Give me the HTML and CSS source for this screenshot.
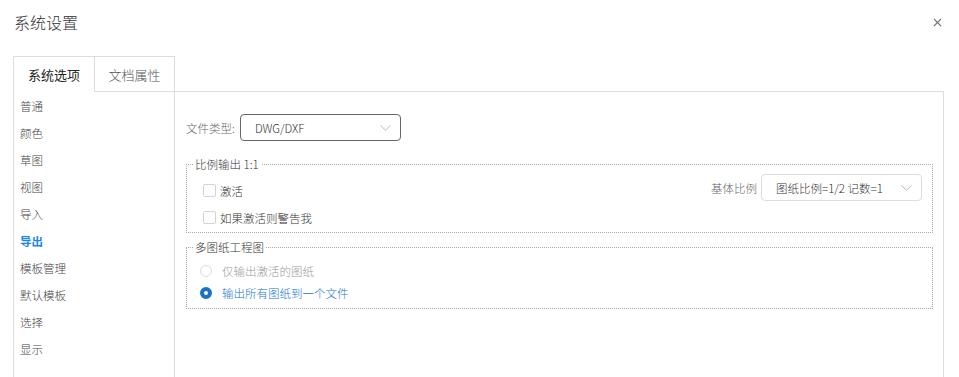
FILE: index.html
```html
<!DOCTYPE html>
<html lang="zh">
<head>
  <meta charset="UTF-8">
  <title>系统设置</title>
  <link rel="stylesheet" href="styles.css">
</head>
<body>
  <div class="header">
    <span class="title">系统设置</span>
    <svg class="close" width="9" height="9" viewBox="0 0 9 9"><path d="M1 1L8 8M8 1L1 8" stroke="#777" stroke-width="1.1" fill="none"/></svg>
  </div>

  <div class="tabbar">
    <div class="tab active">系统选项</div>
    <div class="tab">文档属性</div>
    <div class="tab-rest"></div>
  </div>

  <div class="panel">
    <ul class="menu">
      <li>普通</li>
      <li>颜色</li>
      <li>草图</li>
      <li>视图</li>
      <li>导入</li>
      <li class="current">导出</li>
      <li>模板管理</li>
      <li>默认模板</li>
      <li>选择</li>
      <li>显示</li>
    </ul>

    <div class="content">
      <div class="row-type">
        <span class="label">文件类型:</span>
        <div class="select dark">
          <span>DWG/DXF</span>
          <svg width="11" height="6" viewBox="0 0 11 6"><path d="M0.5 0.5L5.5 5.2L10.5 0.5" stroke="#bbb" fill="none"/></svg>
        </div>
      </div>

      <fieldset class="group">
        <legend>比例输出 1:1</legend>
        <div class="group-body">
          <div class="checks">
            <label class="check"><span class="box"></span>激活</label>
            <label class="check"><span class="box"></span>如果激活则警告我</label>
          </div>
          <div class="scale">
            <span class="label">基体比例</span>
            <div class="select light">
              <span>图纸比例=1/2 记数=1</span>
              <svg width="11" height="6" viewBox="0 0 11 6"><path d="M0.5 0.5L5.5 5.2L10.5 0.5" stroke="#bbb" fill="none"/></svg>
            </div>
          </div>
        </div>
      </fieldset>

      <fieldset class="group second">
        <legend>多图纸工程图</legend>
        <label class="radio off"><span class="dot"></span>仅输出激活的图纸</label>
        <label class="radio on"><span class="dot"></span>输出所有图纸到一个文件</label>
      </fieldset>
    </div>
  </div>
</body>
</html>
```

FILE: styles.css
```css
body {
  margin: 0;
  font-family: "Noto Sans CJK SC", "Noto Sans", sans-serif;
  font-weight: 300;
  color: #333;
  background-color: white;
  height: 377px;
  overflow: hidden;
}

.header {
  height: 56px;
  box-sizing: border-box;
  padding: 11px 17px 0 14px;
  display: flex;
  justify-content: space-between;
  align-items: flex-start;
}

.title {
  font-size: 16px;
  line-height: 22px;
  color: #333;
}

.close {
  margin-top: 7px;
}

.tabbar {
  display: flex;
  margin-left: 13px;
  width: 931px;
  height: 36px;
}

.tab {
  width: 81px;
  height: 36px;
  box-sizing: border-box;
  border: 1px solid #ddd;
  line-height: 36px;
  text-align: center;
  font-size: 13px;
  color: #555;
}

.tab.active {
  width: 82px;
  border-bottom: none;
  color: #222;
  font-weight: 400;
}

.tab + .tab {
  width: 80px;
  border-left: none;
}

.tab-rest {
  flex: 1;
  border-bottom: 1px solid #ddd;
}

.panel {
  display: flex;
  margin-left: 13px;
  width: 931px;
  height: 285px;
}

.menu {
  list-style: none;
  margin: 0;
  padding: 1px 0 0 6px;
  width: 162px;
  box-sizing: border-box;
  border-left: 1px solid #ddd;
  border-right: 1px solid #ddd;
}

.menu li {
  line-height: 27px;
  font-size: 11.5px;
  color: #444;
}

.menu li.current {
  color: #1a86f0;
  font-weight: bold;
}

.content {
  flex: 1;
  border-right: 1px solid #ddd;
  padding: 22px 0 0 11px;
  font-size: 11.5px;
}

.row-type {
  display: flex;
  align-items: center;
  gap: 5px;
}

.label {
  color: #666;
}

.select {
  height: 27px;
  width: 161px;
  box-sizing: border-box;
  border-radius: 4px;
  padding: 0 9px 0 14px;
  display: flex;
  align-items: center;
  justify-content: space-between;
  color: #333;
}

.select.dark {
  border: 1px solid #666;
}

.select.light {
  border: 1px solid #ddd;
}

.group {
  margin: 15px 0 0 0;
  width: 747px;
  box-sizing: border-box;
  border: 1px dotted #aaa;
  padding: 5px 10px 1px 16px;
  min-width: 0;
}

.group legend {
  margin-left: -10px;
  padding: 0 2px;
  line-height: 16px;
  color: #333;
}

.group-body {
  display: flex;
  justify-content: space-between;
}

.check {
  display: flex;
  align-items: center;
  height: 27px;
  gap: 4px;
}

.box {
  width: 11px;
  height: 11px;
  border: 1px solid #d4d4d4;
  border-radius: 2px;
}

.scale {
  display: flex;
  align-items: center;
  gap: 4px;
  margin-top: -3px;
  height: 27px;
}

.group.second {
  margin-top: 6px;
  padding: 5px 10px 4px 13px;
}

.group.second legend {
  margin-left: -7px;
}

.radio {
  display: flex;
  align-items: center;
  height: 22px;
  gap: 10px;
}

.dot {
  width: 12px;
  height: 12px;
  box-sizing: border-box;
  border-radius: 50%;
}

.radio.off {
  color: #999;
}

.radio.off .dot {
  border: 1px solid #ddd;
}

.radio.on {
  color: #1676d2;
}

.radio.on .dot {
  border: 4px solid #1a72c6;
  background-color: white;
}
```
